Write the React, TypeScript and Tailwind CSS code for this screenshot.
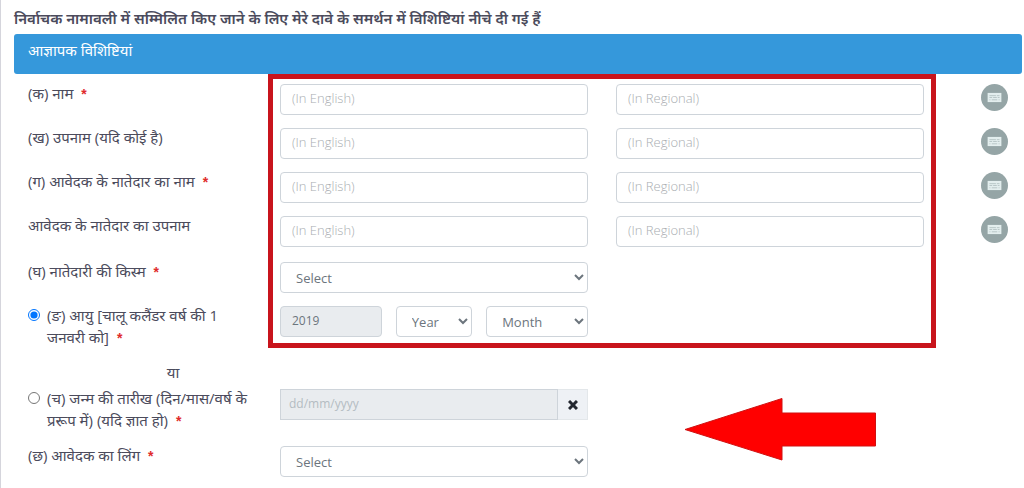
import type { ReactNode } from "react";

const controlClass =
  "block h-[31px] w-full min-w-0 rounded border border-[#ced4da] bg-white px-[11px] pb-[3px] text-[13px] font-light text-[#6c757d] placeholder:text-[#a9adb1]";
const selectClass =
  "block h-[31px] w-full min-w-0 rounded border border-[#ced4da] bg-white pl-[11px] text-[13px] font-normal text-[#6c757d]";

const Required = () => (
  <span className="ml-1 font-['Liberation_Sans',sans-serif] text-sm font-bold leading-none text-[#e02b2b]">*</span>
);

const KeyboardButton = ({ label }: { label: string }) => (
  <button
    type="button"
    aria-label={label}
    className="flex size-[27px] shrink-0 items-center justify-center rounded-full bg-[#95a5a6]"
  >
    <svg viewBox="0 0 16 12" className="h-[11px] w-[15px]" fill="none">
      <rect x="0.5" y="1" width="15" height="10" fill="#e3eeee" />
      <path
        d="M2.500 4h7M10.500 4h3M2.500 6h3M6.500 6h4M11.500 6h2M2.500 8.500h1M5 8.500h6M12.500 8.500h1"
        stroke="#a9b8b9"
        strokeWidth="0.8"
      />
    </svg>
  </button>
);

type RowProps = {
  label: ReactNode;
  children: ReactNode;
};

const Row = ({ label, children }: RowProps) => (
  <div className="grid grid-cols-12 items-start">
    <div className="col-span-3 pl-[14px]">{label}</div>
    {children}
  </div>
);

const FieldCell = ({ children }: { children: ReactNode }) => (
  <div className="col-span-4 px-[14px] pt-[2px]">{children}</div>
);

const nameRows = [
  { id: "name", label: "(क) नाम", required: true },
  { id: "surname", label: "(ख) उपनाम (यदि कोई है)", required: false },
  { id: "relative-name", label: "(ग) आवेदक के नातेदार का नाम", required: true },
  { id: "relative-surname", label: "आवेदक के नातेदार का उपनाम", required: false },
];

const App = () => {
  return (
    <main className="border-l border-[#d5d5dc] bg-white pb-[11px] pl-[13px] pr-[2px] pt-[7px] font-['Open_Sans','Noto_Sans',sans-serif] text-[15px] leading-[22px] text-[#4b4b5c]">
      <h1 className="mb-[5px] text-[15px] font-semibold leading-[22px]">
        निर्वाचक नामावली में सम्मिलित किए जाने के लिए मेरे दावे के समर्थन में विशिष्टियां नीचे दी गई हैं
      </h1>
      <h2 className="rounded-[3px] bg-[#3598db] px-[14px] pb-[13px] pt-[5px] text-[15px] font-normal leading-[22px] text-white">
        आज्ञापक विशिष्टियां
      </h2>

      <form>
        {/* Fields to be filled in, framed in red */}
        <div className="relative flex flex-col gap-[13px] pt-2">
          <div className="flex flex-col gap-[11px]">
            {nameRows.map((row) => (
              <Row
                key={row.id}
                label={
                  <label htmlFor={row.id}>
                    {row.label} {row.required && <Required />}
                  </label>
                }
              >
                <FieldCell>
                  <input id={row.id} type="text" placeholder="(In English)" className={controlClass} />
                </FieldCell>
                <FieldCell>
                  <input
                    type="text"
                    aria-label={row.label}
                    placeholder="(In Regional)"
                    className={controlClass}
                  />
                </FieldCell>
                <div className="flex justify-end pr-[14px] pt-[2px]">
                  <KeyboardButton label={row.label} />
                </div>
              </Row>
            ))}
          </div>

          <div className="flex flex-col gap-[11px]">
            <Row
              label={
                <label htmlFor="relation">
                  (घ) नातेदारी की किस्म <Required />
                </label>
              }
            >
              <FieldCell>
                <select id="relation" className={selectClass}>
                  <option>Select</option>
                </select>
              </FieldCell>
            </Row>

            <Row
              label={
                <label className="flex items-start gap-[7px] pr-6">
                  <input type="radio" name="age" defaultChecked className="mt-[5px] size-3 shrink-0" />
                  <span>
                    (ङ) आयु [चालू कलैंडर वर्ष की 1 जनवरी को] <Required />
                  </span>
                </label>
              }
            >
              <FieldCell>
                <div className="grid grid-cols-[4fr_3fr_4fr] gap-[14px]">
                  <input
                    type="text"
                    readOnly
                    aria-label="2019"
                    defaultValue="2019"
                    className="block h-[31px] w-full min-w-0 rounded border border-[#ced4da] bg-[#e9ecef] px-[11px] pb-[3px] text-xs text-[#6c757d]"
                  />
                  <select aria-label="Year" className={selectClass}>
                    <option>Year</option>
                  </select>
                  <select aria-label="Month" className={selectClass}>
                    <option>Month</option>
                  </select>
                </div>
              </FieldCell>
            </Row>
          </div>

          <div className="pointer-events-none absolute inset-0 grid grid-cols-12">
            <div className="col-span-8 col-start-4 mx-[2px] border-5 border-[#c8141c]"></div>
          </div>
        </div>

        <div className="relative mt-[13px]">
          <div className="mb-1 grid grid-cols-12">
            <p className="col-span-3 pl-20 pr-[14px] text-center">या</p>
          </div>

          <div className="flex flex-col gap-[13px]">
            <Row
              label={
                <label className="flex items-start gap-[7px] pr-4">
                  <input type="radio" name="age" className="mt-[5px] size-3 shrink-0" />
                  <span>
                    (च) जन्म की तारीख (दिन/मास/वर्ष के प्ररूप में) (यदि ज्ञात हो) <Required />
                  </span>
                </label>
              }
            >
              <FieldCell>
                <div className="flex">
                  <input
                    type="text"
                    disabled
                    aria-label="dd/mm/yyyy"
                    placeholder="dd/mm/yyyy"
                    className="h-[31px] min-w-0 flex-1 border border-[#ced4da] bg-[#e9ecef] px-2 pb-[3px] text-xs placeholder:text-[#b4bcc2]"
                  />
                  <button
                    type="button"
                    aria-label="✖"
                    className="flex h-[31px] w-[30px] items-center justify-center border border-l-0 border-[#e3e7ea] bg-[#eef1f5]"
                  >
                    <svg viewBox="0 0 10 10" className="size-[10px]" stroke="#23272f" strokeWidth="3">
                      <path d="M1 1l8 8M9 1l-8 8" />
                    </svg>
                  </button>
                </div>
              </FieldCell>
            </Row>

            <Row
              label={
                <label htmlFor="gender">
                  (छ) आवेदक का लिंग <Required />
                </label>
              }
            >
              <FieldCell>
                <select id="gender" className={selectClass}>
                  <option>Select</option>
                </select>
              </FieldCell>
            </Row>
          </div>

          {/* Arrow */}
          <div className="pointer-events-none absolute inset-x-0 top-9 grid grid-cols-12">
            <div className="col-span-4 col-start-8 flex justify-center pl-5">
              <svg viewBox="0 0 193 64" className="h-16 w-[193px]">
                <path
                  d="M1 32.500L98 1.500V16H191.500V49H98V63Z"
                  fill="#ff0000"
                  stroke="#d01010"
                  strokeWidth="1"
                  strokeLinejoin="round"
                />
              </svg>
            </div>
          </div>
        </div>
      </form>
    </main>
  );
};

export default App;
